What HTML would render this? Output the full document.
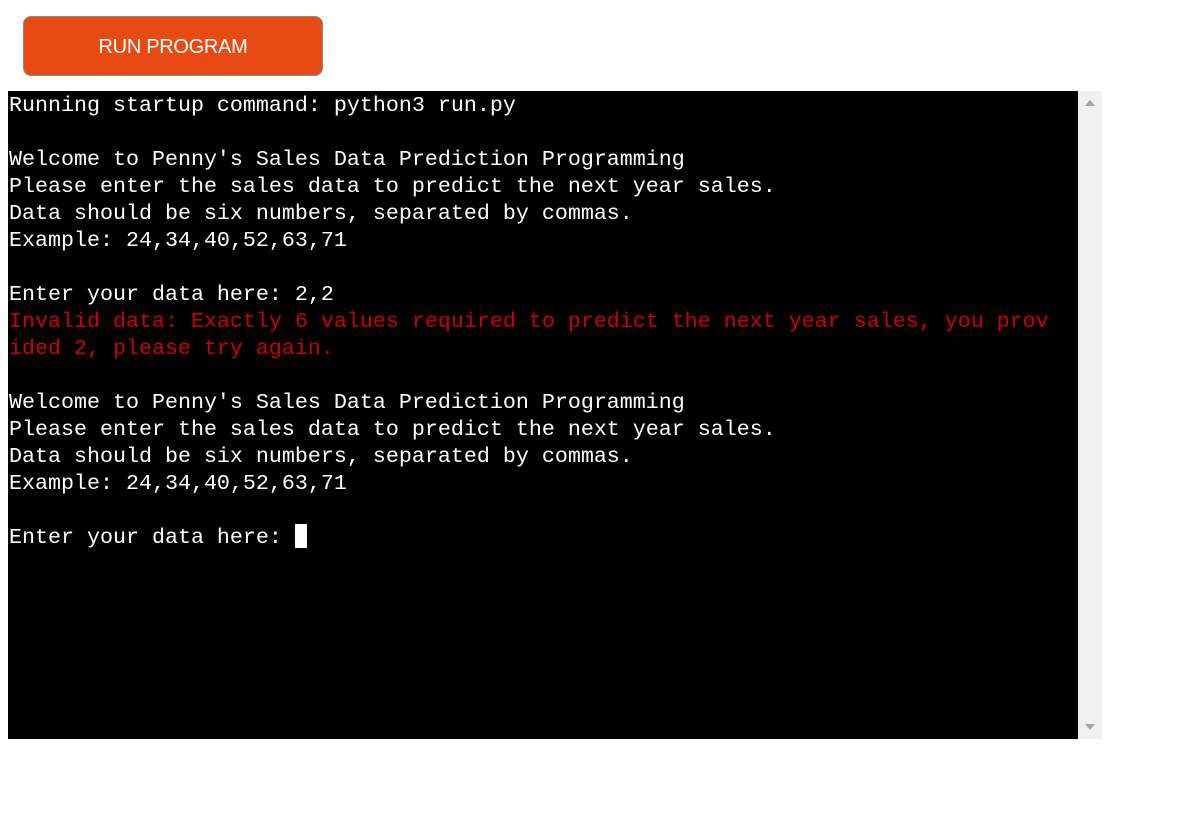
<!DOCTYPE html>
<html><head><style>
body{margin:0;background:#fff;width:1189px;height:825px;overflow:hidden;position:relative}
.btn{position:absolute;left:23px;top:16px;width:298px;height:58px;background:#e84a14;border:1px solid #8a8a8a;border-radius:8px;color:#fff;font:20px "Liberation Sans",sans-serif;display:flex;align-items:center;justify-content:center;padding-top:2px;box-sizing:border-box;height:60px;width:300px;letter-spacing:-0.3px}
.term{position:absolute;left:8px;top:91px;width:1070px;height:648px;background:#000;color:#fff;font:21.67px/27px "Liberation Mono",monospace;white-space:pre;padding-left:1px;padding-top:1px;box-sizing:border-box}
.r{color:#cd0000}
.sb{position:absolute;left:1078px;top:91px;width:24px;height:648px;background:#f0f0f0}
.up{position:absolute;left:7px;top:9px;width:0;height:0;border-left:5px solid transparent;border-right:5px solid transparent;border-bottom:6px solid #a3a3a3}
.dn{position:absolute;left:7px;bottom:9px;width:0;height:0;border-left:5px solid transparent;border-right:5px solid transparent;border-top:6px solid #a3a3a3}
.cur{display:inline-block;width:12px;height:24px;background:#fff;vertical-align:-5px}
</style></head><body>
<div class="btn">RUN PROGRAM</div>
<div class="term">Running startup command: python3 run.py

Welcome to Penny's Sales Data Prediction Programming
Please enter the sales data to predict the next year sales.
Data should be six numbers, separated by commas.
Example: 24,34,40,52,63,71

Enter your data here: 2,2
<span class="r">Invalid data: Exactly 6 values required to predict the next year sales, you prov
ided 2, please try again.</span>

Welcome to Penny's Sales Data Prediction Programming
Please enter the sales data to predict the next year sales.
Data should be six numbers, separated by commas.
Example: 24,34,40,52,63,71

Enter your data here: <span class="cur"></span></div>
<div class="sb"><div class="up"></div><div class="dn"></div></div>
</body></html>
